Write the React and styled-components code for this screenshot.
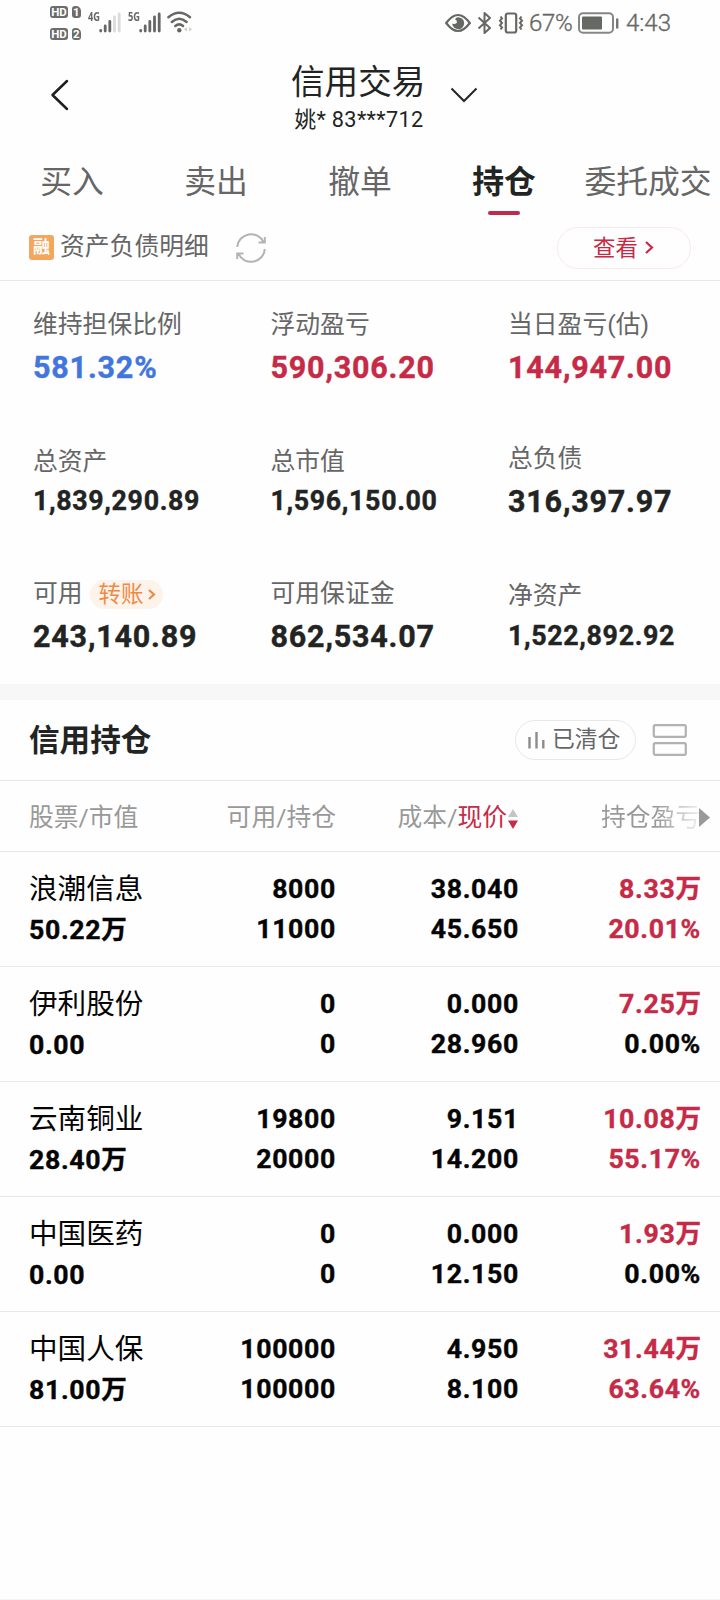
import React from 'react';
import styled, { createGlobalStyle } from 'styled-components';

const RED = '#c62a46';
const GREY = '#666666';

const Global = createGlobalStyle`
  * { box-sizing: border-box; }
  body {
    margin: 0;
    background: #fefefe;
    font-family: Roboto, 'Noto Sans CJK SC', sans-serif;
    color: #222423;
  }
`;

const Screen = styled.div`
  width: 720px;
  height: 1600px;
  display: flex;
  flex-direction: column;
  overflow: hidden;
  border-bottom: 1px solid #f4f4f4;
`;

/* Status bar */
const StatusBar = styled.header`
  height: 48px;
  display: flex;
  justify-content: space-between;
  padding: 0 49px 0 50px;
  color: #666864;
`;
const StatusLeft = styled.div`
  display: flex;
  align-items: flex-start;
  padding-top: 6px;
`;
const StatusRight = styled.div`
  display: flex;
  align-items: center;
  height: 46px;
`;
const SimStack = styled.div`
  display: flex;
  flex-direction: column;
  gap: 10px;
`;
const SimRow = styled.div`
  display: flex;
  gap: 4px;
`;
const Tag = styled.span`
  width: ${(p) => p.$w}px;
  height: 12px;
  border-radius: 3px;
  ${(p) => p.$cut && 'border-top-right-radius: 5px;'}
  background: #6c6c6a;
  color: #fff;
  font-size: 11.5px;
  font-weight: 700;
  line-height: 12.5px;
  text-align: center;
`;
const NetLabel = styled.span`
  width: 12px;
  margin-left: ${(p) => p.$gap}px;
  margin-top: 5px;
  font-family: 'Open Sans', sans-serif;
  font-size: 12.5px;
  font-weight: 700;
  line-height: 12px;
  transform: scaleX(0.74);
  transform-origin: left;
`;
const StatusText = styled.span`
  font-family: Roboto, sans-serif;
  font-size: 24px;
  font-weight: 300;
  -webkit-text-stroke: 0.35px currentColor;
  line-height: 46px;
  letter-spacing: ${(p) => p.$track}px;
  margin-left: ${(p) => p.$gap}px;
  width: ${(p) => p.$w}px;
  white-space: nowrap;
`;
const Glyph = styled.svg`
  display: block;
  flex: none;
  overflow: visible;
  margin-left: ${(p) => p.$ml || 0}px;
  margin-top: ${(p) => p.$mt || 0}px;
`;

/* Title */
const TitleBar = styled.div`
  height: 98px;
  display: grid;
  grid-template-columns: 292px 132px 1fr;
  padding-top: 13px;
`;
const TitleText = styled.h1`
  margin: 2px 0 0;
  font-size: 33.6px;
  font-weight: 400;
  line-height: 40px;
  white-space: nowrap;
  margin-left: -1px;
`;
const Account = styled.div`
  font-size: 21.7px;
  line-height: 33px;
  letter-spacing: 0.35px;
  padding-left: 2px;
  text-align: center;
  white-space: nowrap;
`;

/* Tabs */
const Tabs = styled.nav`
  height: 74px;
  display: grid;
  grid-template-columns: repeat(5, 144px);
`;
const Tab = styled.div`
  display: flex;
  flex-direction: column;
  align-items: center;
  height: 69px;
  padding-top: 6px;
  font-size: 31.8px;
  line-height: 61px;
  white-space: nowrap;
  color: ${(p) => (p.$active ? '#222423' : GREY)};
  font-weight: ${(p) => (p.$active ? 700 : 400)};
  &::after {
    content: '';
    flex: none;
    width: 32px;
    height: 4px;
    margin-top: -2px;
    border-radius: 2px;
    background: ${(p) => (p.$active ? '#bd2c4b' : 'transparent')};
  }
`;

/* Asset summary */
const DetailBar = styled.div`
  height: 61px;
  display: flex;
  align-items: center;
  padding: 0 29px;
  padding-bottom: 5px;
  border-bottom: 1px solid #e8e8e8;
`;
const Badge = styled.span`
  width: 25px;
  height: 25px;
  border-radius: 3px;
  background: #f5a65e;
  color: #fff;
  font-size: 17px;
  font-weight: 700;
  line-height: 25px;
  text-align: center;
`;
const DetailText = styled.span`
  font-size: 24.8px;
  line-height: 36px;
  margin-left: 6px;
  margin-bottom: 2px;
  color: ${GREY};
`;
const ViewButton = styled.div`
  width: 134px;
  height: 42px;
  margin-left: auto;
  border: 1px solid #f7eaed;
  border-radius: 21px;
  display: flex;
  align-items: center;
  padding-left: 35px;
  font-size: 22.4px;
  line-height: 40px;
  color: ${RED};
`;
const Summary = styled.section`
  height: 403px;
  display: grid;
  grid-template-columns: 237.5px 237.5px 1fr;
  grid-template-rows: 134px 134px 1fr;
  padding: 26px 0 0 33px;
`;
const Metric = styled.div`
  display: flex;
  flex-direction: column;
  padding-top: ${(p) => p.$top || 0}px;
`;
const MetricLabel = styled.div`
  display: flex;
  align-items: center;
  height: 36px;
  font-size: 24.8px;
  line-height: 36px;
  color: ${GREY};
`;
const MetricValue = styled.div`
  font-size: ${(p) => (p.$small ? 26.8 : 30.5)}px;
  font-weight: 700;
  -webkit-text-stroke: 0.4px currentColor;
  letter-spacing: ${(p) => (p.$small ? 0.65 : 0.8)}px;
  line-height: 40px;
  margin-top: ${(p) => p.$gap}px;
  color: ${(p) => p.$color || '#222423'};
`;
const Transfer = styled.span`
  width: 73px;
  height: 29px;
  margin: 1px 0 0 7px;
  border-radius: 15px;
  background: #fef3ea;
  color: #ee8a45;
  display: flex;
  align-items: center;
  padding-left: 9px;
  font-size: 22.5px;
  line-height: 27px;
`;
const Band = styled.div`
  height: 16px;
  background: #f7f7f7;
`;

/* Holdings */
const HoldingsHead = styled.div`
  height: 81px;
  display: flex;
  align-items: center;
  padding: 0 33px 0 29px;
  border-bottom: 1px solid #e8e8e8;
`;
const HoldingsTitle = styled.h2`
  margin: 0;
  padding-top: 1px;
  font-size: 30.6px;
  font-weight: 700;
  line-height: 44px;
  flex: 1;
`;
const ClearedButton = styled.div`
  width: 121px;
  height: 40px;
  border: 1px solid #e8e8e8;
  border-radius: 20px;
  display: flex;
  align-items: center;
  gap: 7px;
  padding-left: 12px;
  font-size: 22.8px;
  line-height: 38px;
  color: ${GREY};
`;
const Columns = styled.div`
  display: grid;
  grid-template-columns: 157px 150px 183px 182px;
  padding-left: 29px;
  border-bottom: 1px solid #e8e8e8;
`;
const TableHead = styled(Columns)`
  height: 71px;
  font-size: 24.8px;
  line-height: 71px;
  color: #999999;
  white-space: nowrap;
`;
const HeadCell = styled.div`
  display: flex;
  align-items: center;
  padding-top: 1px;
  justify-content: ${(p) => (p.$right ? 'flex-end' : 'flex-start')};
`;
const SortCell = styled(HeadCell)`
  padding-right: 1px;
`;
const LastHeadCell = styled(HeadCell)`
  padding-left: 82px;
`;
const FadeText = styled.span`
  flex: none;
  background: linear-gradient(90deg, #999 55%, #f0f0f0 100%);
  background-clip: text;
  color: transparent;
`;
const Hot = styled.span`
  color: ${RED};
`;
const StockRow = styled(Columns)`
  height: 115px;
  color: #050505;
`;
const Cell = styled.div`
  display: flex;
  flex-direction: column;
  align-items: ${(p) => (p.$right ? 'flex-end' : 'flex-start')};
  padding-top: 17px;
  white-space: nowrap;
`;
const StockName = styled.div`
  font-size: 28.6px;
  line-height: 40px;
  height: 41px;
`;
const Num = styled.div`
  font-size: 26.7px;
  font-weight: 700;
  -webkit-text-stroke: 0.4px currentColor;
  letter-spacing: 0.65px;
  line-height: 40px;
  height: 40px;
  color: ${(p) => (p.$red ? RED : 'inherit')};
`;
const Unit = styled.span`
  font-size: 25.6px;
  letter-spacing: 0;
`;

const TABS = ['买入', '卖出', '撤单', '持仓', '委托成交'];

const METRICS = [
  { label: '维持担保比例', value: '581.32%', color: '#4376dc', gap: 5 },
  { label: '浮动盈亏', value: '590,306.20', color: RED, gap: 5 },
  { label: '当日盈亏(估)', value: '144,947.00', color: RED, gap: 5 },
  { label: '总资产', value: '1,839,290.89', small: true, top: 3, gap: 1 },
  { label: '总市值', value: '1,596,150.00', small: true, top: 3, gap: 1 },
  { label: '总负债', value: '316,397.97', top: 0, gap: 5 },
  { label: '可用', value: '243,140.89', transfer: true, gap: 5, top: 1 },
  { label: '可用保证金', value: '862,534.07', gap: 5, top: 1 },
  { label: '净资产', value: '1,522,892.92', small: true, top: 3, gap: 2 },
];

const STOCKS = [
  ['浪潮信息', '50.22万', '8000', '11000', '38.040', '45.650', '8.33万', '20.01%'],
  ['伊利股份', '0.00', '0', '0', '0.000', '28.960', '7.25万', '0.00%'],
  ['云南铜业', '28.40万', '19800', '20000', '9.151', '14.200', '10.08万', '55.17%'],
  ['中国医药', '0.00', '0', '0', '0.000', '12.150', '1.93万', '0.00%'],
  ['中国人保', '81.00万', '100000', '100000', '4.950', '8.100', '31.44万', '63.64%'],
];

const Amount = ({ value, red }) => (
  <Num $red={red}>
    {value.replace('万', '')}
    {value.endsWith('万') && <Unit>万</Unit>}
  </Num>
);

const Signal = ({ ml, bars }) => (
  <Glyph $ml={ml} $mt={5} width="22" height="22" viewBox="0 0 22 22">
    {bars.map(([x, y, c]) => (
      <path key={x} d={`M${x} ${y}V20`} stroke={c} strokeWidth="2.8" strokeLinecap="round" />
    ))}
  </Glyph>
);

const SmallChevron = ({ ml, w, h, mt = 0, stroke = 2.2 }) => (
  <Glyph $ml={ml} $mt={mt} width={w} height={h} viewBox={`0 0 ${w} ${h}`} fill="none" stroke="currentColor" strokeWidth={stroke}>
    <path d={`M1 1L${w - 1} ${h / 2}L1 ${h - 1}`} />
  </Glyph>
);

const Status = () => (
  <StatusBar>
    <StatusLeft>
      <SimStack>
        <SimRow><Tag $w={18}>HD</Tag><Tag $w={8.5} $cut>1</Tag></SimRow>
        <SimRow><Tag $w={18}>HD</Tag><Tag $w={8.5} $cut>2</Tag></SimRow>
      </SimStack>
      <NetLabel $gap={7}>4G</NetLabel>
      <Signal ml={-1} bars={[[1.7, 19.5, '#666'], [6.2, 15, '#666'], [10.8, 10.5, '#666'], [15.5, 6, '#dcdada'], [20.2, 3, '#dcdada']]} />
      <NetLabel $gap={7}>5G</NetLabel>
      <Signal ml={-1} bars={[[1.7, 19.5, '#666'], [6.2, 15, '#666'], [10.8, 10.5, '#666'], [15.5, 6, '#666'], [20.2, 3, '#666']]} />
      <Glyph $ml={6} $mt={5} width="26" height="22" viewBox="0 0 26 22" fill="none" stroke="#666864" strokeWidth="2.5" strokeLinecap="round">
        <path d="M1.4 6.2Q12.2 -2.8 23 6.2M4.8 11Q12.2 4.4 19.6 11M8.3 15Q12.2 11.8 16.1 15" />
        <circle cx="12.3" cy="19.2" r="2.2" fill="#666864" stroke="none" />
        <path d="M20 16V20.5L16.8 18.3ZM22 16V20.5L25.3 18.3Z" fill="#d2d2d2" stroke="none" />
      </Glyph>
    </StatusLeft>
    <StatusRight>
      <Glyph width="26" height="18" viewBox="0 0 26 18">
        <path d="M1.2 9Q13 -7 24.8 9Q13 25 1.2 9Z" fill="none" stroke="#666864" strokeWidth="2.2" />
        <path d="M13 3.2A6 6 0 1 1 7.2 9.8Q11.5 10.5 12 8.2Q12 6 10 5.2Q11.2 3.4 13 3.2Z" fill="#666864" />
      </Glyph>
      <Glyph $ml={6} width="15" height="22" viewBox="0 0 15 22" fill="none" stroke="#666864" strokeWidth="2">
        <path d="M1.5 5.5L13 16L7.5 21V1L13 6L1.5 16.5" strokeLinejoin="round" />
      </Glyph>
      <Glyph $ml={6} width="26" height="20" viewBox="0 0 26 20" fill="none" stroke="#666864">
        <rect x="7.8" y="0.5" width="10.4" height="19" rx="2" strokeWidth="2.2" />
        <path d="M2.5 3.5L4 5.5L2 7.7L4 10L2 12.2L4 14.5L2.5 16.5M23.5 3.5L22 5.5L24 7.7L22 10L24 12.2L22 14.5L23.5 16.5" strokeWidth="2" />
      </Glyph>
      <StatusText $gap={5} $w={49} $track={-0.3}>67%</StatusText>
      <Glyph width="41" height="22" viewBox="0 0 41 22" fill="none">
        <rect x="1" y="1.2" width="34" height="19.6" rx="4" stroke="#868684" strokeWidth="2" />
        <rect x="4" y="4.5" width="20" height="13" rx="1" fill="#666864" />
        <path d="M39.2 7.5V15.5" stroke="#757573" strokeWidth="2.4" strokeLinecap="round" />
      </Glyph>
      <StatusText $gap={7} $w={45} $track={0}>4:43</StatusText>
    </StatusRight>
  </StatusBar>
);

export default function App() {
  return (
    <Screen>
      <Global />
      <Status />
      <TitleBar>
        <Glyph $ml={51} $mt={18} width="18" height="32" viewBox="0 0 18 32" fill="none" stroke="#1f1f1f" strokeWidth="2.5" strokeLinecap="round" strokeLinejoin="round">
          <path d="M16 2L1.5 16L16 30" />
        </Glyph>
        <div>
          <TitleText>信用交易</TitleText>
          <Account>姚* 83***712</Account>
        </div>
        <Glyph $ml={26} $mt={25} width="28" height="16" viewBox="0 0 28 16" fill="none" stroke="#262626" strokeWidth="2">
          <path d="M1.5 2.5L14 15L26.5 2.5" />
        </Glyph>
      </TitleBar>
      <Tabs>
        {TABS.map((t) => (
          <Tab key={t} $active={t === '持仓'}>{t}</Tab>
        ))}
      </Tabs>
      <DetailBar>
        <Badge>融</Badge>
        <DetailText>资产负债明细</DetailText>
        <Glyph $ml={27} $mt={1} width="30" height="30" viewBox="0 0 30 30" fill="none" stroke="#b3b3b3" strokeWidth="2">
          <path d="M1.2 14A13.8 13.8 0 0 1 27.5 9.2M28.8 4V9.5H22.5M28.8 16A13.8 13.8 0 0 1 2.5 20.8M1.2 26V20.5H7.5" />
        </Glyph>
        <ViewButton>
          查看
          <SmallChevron ml={7} w={8} h={13} />
        </ViewButton>
      </DetailBar>
      <Summary>
        {METRICS.map((m) => (
          <Metric key={m.label} $top={m.top}>
            <MetricLabel>
              {m.label}
              {m.transfer && (
                <Transfer>
                  转账
                  <SmallChevron ml={4} w={7} h={11} mt={-1} />
                </Transfer>
              )}
            </MetricLabel>
            <MetricValue $small={m.small} $gap={m.gap} $color={m.color}>{m.value}</MetricValue>
          </Metric>
        ))}
      </Summary>
      <Band />
      <HoldingsHead>
        <HoldingsTitle>信用持仓</HoldingsTitle>
        <ClearedButton>
          <Glyph width="17" height="18" viewBox="0 0 17 18" stroke="#8c8c8c" strokeWidth="2.4">
            <path d="M1.5 6V17.5M8.5 1V17.5M15.3 9V17.5" />
          </Glyph>
          <span>已清仓</span>
        </ClearedButton>
        <Glyph $ml={17} width="34" height="32" viewBox="0 0 34 32" fill="none" stroke="#b3b1b1" strokeWidth="2.2">
          <rect x="0.8" y="1.2" width="32" height="11.6" rx="1.5" />
          <rect x="0.8" y="19.2" width="32" height="11.6" rx="1.5" />
        </Glyph>
      </HoldingsHead>
      <TableHead>
        <HeadCell>股票/市值</HeadCell>
        <HeadCell $right>可用/持仓</HeadCell>
        <SortCell $right>
          成本/<Hot>现价</Hot>
          <Glyph $ml={1} $mt={2} width="10" height="20" viewBox="0 0 10 20">
            <path d="M0 8L5 0L10 8Z" fill="#c4c4c4" />
            <path d="M0 11.5H10L5 20Z" fill={RED} />
          </Glyph>
        </SortCell>
        <LastHeadCell>
          <FadeText>持仓盈亏</FadeText>
          <Glyph $ml={-1} width="11" height="19" viewBox="0 0 11 19">
            <path d="M0 0L11 9.5L0 19Z" fill="#999" />
          </Glyph>
        </LastHeadCell>
      </TableHead>
      {STOCKS.map(([name, worth, avail, held, cost, price, gain, pct]) => (
        <StockRow key={name}>
          <Cell>
            <StockName>{name}</StockName>
            <Amount value={worth} />
          </Cell>
          <Cell $right>
            <Amount value={avail} />
            <Amount value={held} />
          </Cell>
          <Cell $right>
            <Amount value={cost} />
            <Amount value={price} />
          </Cell>
          <Cell $right>
            <Amount value={gain} red />
            <Amount value={pct} red={pct !== '0.00%'} />
          </Cell>
        </StockRow>
      ))}
    </Screen>
  );
}
